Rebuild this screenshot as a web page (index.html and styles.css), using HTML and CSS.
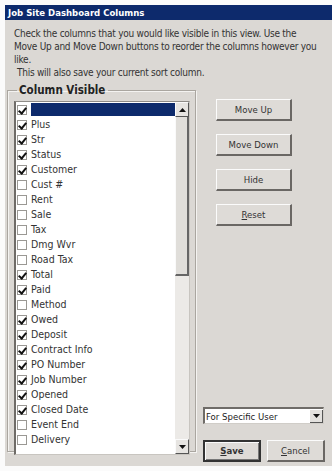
FILE: index.html
```html
<!DOCTYPE html>
<html lang="en">
<head>
    <meta charset="UTF-8">
    <title>Job Site Dashboard Columns</title>
    <link rel="stylesheet" href="styles.css">
</head>
<body>
    <div class="dialog">
        <div class="titlebar">Job Site Dashboard Columns</div>
        <div class="intro">
            <p>Check the columns that you would like visible in this view. Use the<br>Move Up and Move Down buttons to reorder the columns however you<br>like.</p>
            <p class="indent">This will also save your current sort column.</p>
        </div>
        <div class="main">
            <fieldset class="group">
                <legend>Column Visible</legend>
                <div class="list">
                    <div class="items">
                        <div class="row selected"><span class="box on"></span><span class="label"></span></div>
                        <div class="row"><span class="box on"></span><span class="label">Plus</span></div>
                        <div class="row"><span class="box on"></span><span class="label">Str</span></div>
                        <div class="row"><span class="box on"></span><span class="label">Status</span></div>
                        <div class="row"><span class="box on"></span><span class="label">Customer</span></div>
                        <div class="row"><span class="box"></span><span class="label">Cust #</span></div>
                        <div class="row"><span class="box"></span><span class="label">Rent</span></div>
                        <div class="row"><span class="box"></span><span class="label">Sale</span></div>
                        <div class="row"><span class="box"></span><span class="label">Tax</span></div>
                        <div class="row"><span class="box"></span><span class="label">Dmg Wvr</span></div>
                        <div class="row"><span class="box"></span><span class="label">Road Tax</span></div>
                        <div class="row"><span class="box on"></span><span class="label">Total</span></div>
                        <div class="row"><span class="box on"></span><span class="label">Paid</span></div>
                        <div class="row"><span class="box"></span><span class="label">Method</span></div>
                        <div class="row"><span class="box on"></span><span class="label">Owed</span></div>
                        <div class="row"><span class="box on"></span><span class="label">Deposit</span></div>
                        <div class="row"><span class="box on"></span><span class="label">Contract Info</span></div>
                        <div class="row"><span class="box on"></span><span class="label">PO Number</span></div>
                        <div class="row"><span class="box on"></span><span class="label">Job Number</span></div>
                        <div class="row"><span class="box on"></span><span class="label">Opened</span></div>
                        <div class="row"><span class="box on"></span><span class="label">Closed Date</span></div>
                        <div class="row"><span class="box"></span><span class="label">Event End</span></div>
                        <div class="row"><span class="box"></span><span class="label">Delivery</span></div>
                    </div>
                    <div class="scrollbar">
                        <div class="arrow">
                            <svg width="7" height="4" viewBox="0 0 7 4"><path d="M0 4 L3.5 0 L7 4 Z" fill="#111"/></svg>
                        </div>
                        <div class="thumb"></div>
                        <div class="track"></div>
                        <div class="arrow">
                            <svg width="7" height="4" viewBox="0 0 7 4"><path d="M0 0 L3.5 4 L7 0 Z" fill="#111"/></svg>
                        </div>
                    </div>
                </div>
            </fieldset>
            <div class="side">
                <div class="buttons">
                    <div class="btn">Move Up</div>
                    <div class="btn">Move Down</div>
                    <div class="btn">Hide</div>
                    <div class="btn"><u>R</u>eset</div>
                </div>
                <div class="bottom">
                    <div class="select">
                        <span>For Specific User</span>
                        <div class="drop">
                            <svg width="7" height="4" viewBox="0 0 7 4"><path d="M0 0 L3.5 4 L7 0 Z" fill="#111"/></svg>
                        </div>
                    </div>
                    <div class="actions">
                        <div class="btn small default"><u>S</u>ave</div>
                        <div class="btn small"><u>C</u>ancel</div>
                    </div>
                </div>
            </div>
        </div>
    </div>
</body>
</html>
```

FILE: styles.css
```css
*{
    margin: 0;
    padding: 0;
    box-sizing: border-box;
}
body{
    background-color: #fbfbfb;
    font-family: "DejaVu Sans Condensed", "Liberation Sans", sans-serif;
    color: #2a2a2a;
}
.dialog{
    margin: 5px 0 0 5px;
    width: 327px;
    height: 461px;
    background-color: #dbd8d4;
    display: flex;
    flex-direction: column;
}
.titlebar{
    height: 15px;
    background-color: #0d2a6c;
    color: #fff;
    font-weight: bold;
    font-size: 9.5px;
    line-height: 15px;
    padding-left: 3px;
}
.intro{
    padding: 7px 0 0 9px;
    font-size: 10px;
    line-height: 13px;
    letter-spacing: -0.25px;
    white-space: nowrap;
    color: #333;
}
.intro .indent{
    padding-left: 3px;
}
.main{
    display: flex;
    flex: 1;
}
.group{
    margin: 5px 0 0 2px;
    width: 189px;
    height: 368px;
    border: 1px solid #aaa6a0;
    box-shadow: 1px 1px 0 #f4f3f1, inset 1px 1px 0 #f4f3f1;
    padding: 4px 5px 0 6px;
}
.group legend{
    margin-left: 3px;
    padding: 0 3px 0 2px;
    font-weight: bold;
    font-size: 11.5px;
    line-height: 13px;
    color: #222;
}
.list{
    display: flex;
    height: 354px;
    background-color: #fff;
    border-top: 1px solid #8f8c88;
    border-left: 2px solid #6f6c68;
    border-right: 1px solid #c8c5c0;
    border-bottom: 1px solid #c8c5c0;
}
.items{
    flex: 1;
}
.row{
    display: flex;
    align-items: center;
    height: 15px;
    font-size: 10.5px;
    color: #333;
}
.box{
    width: 10px;
    height: 10px;
    margin: 0 4px 0 1px;
    border: 1px solid #9a9894;
    background-color: #fff;
    position: relative;
}
.box.on::after{
    content: "";
    position: absolute;
    left: 2px;
    top: 0px;
    width: 3px;
    height: 6px;
    border-right: 2px solid #111;
    border-bottom: 2px solid #111;
    transform: rotate(40deg);
}
.label{
    flex: 1;
    height: 13px;
    line-height: 13px;
}
.row.selected .label{
    background-color: #0d2a6c;
}
.scrollbar{
    width: 14px;
    display: flex;
    flex-direction: column;
    background-color: #eceae7;
}
.arrow{
    height: 15px;
    display: flex;
    align-items: center;
    justify-content: center;
    background-color: #e6e4e1;
    border-right: 1px solid #555;
    border-bottom: 1px solid #555;
    border-left: 1px solid #fafafa;
    border-top: 1px solid #fafafa;
}
.thumb{
    height: 159px;
    background-color: #e0deda;
    border-right: 2px solid #666;
    border-bottom: 2px solid #666;
    border-left: 1px solid #fafafa;
}
.track{
    flex: 1;
}
.side{
    flex: 1;
    display: flex;
    flex-direction: column;
    justify-content: space-between;
    padding: 20px 0 0 0;
}
.buttons{
    display: flex;
    flex-direction: column;
    gap: 13px;
    padding-left: 20px;
}
.btn{
    width: 76px;
    height: 22px;
    font-size: 9.5px;
    line-height: 20px;
    text-align: center;
    color: #333;
    background-color: #dedbd7;
    border-top: 1px solid #fbfbfb;
    border-left: 1px solid #fbfbfb;
    border-right: 2px solid #6a6764;
    border-bottom: 2px solid #6a6764;
}
.bottom{
    padding: 0 0 4px 7px;
}
.select{
    width: 121px;
    height: 17px;
    display: flex;
    align-items: center;
    background-color: #fff;
    border-top: 2px solid #6f6c68;
    border-left: 2px solid #6f6c68;
    border-right: 1px solid #d0cdc8;
    border-bottom: 1px solid #d0cdc8;
    font-size: 9.5px;
    color: #222;
    padding-left: 1px;
}
.select span{
    flex: 1;
}
.drop{
    width: 13px;
    height: 13px;
    display: flex;
    align-items: center;
    justify-content: center;
    background-color: #e3e1de;
    border-right: 1px solid #555;
    border-bottom: 1px solid #555;
}
.actions{
    display: flex;
    gap: 6px;
    margin-top: 16px;
}
.btn.small{
    width: 58px;
}
.btn.default{
    border: 2px solid #333;
    box-shadow: inset 1px 1px 0 #fbfbfb, inset -1px -1px 0 #777;
    line-height: 18px;
    font-weight: bold;
}
```
